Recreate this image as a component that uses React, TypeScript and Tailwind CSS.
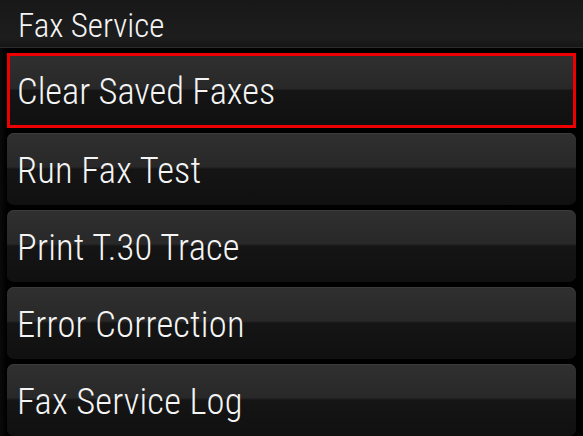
import React from "react";

const items = ["Run Fax Test", "Print T.30 Trace", "Error Correction", "Fax Service Log"];

const font = { fontFamily: '"Roboto Condensed", Roboto, sans-serif' };

function Btn({ label }: { label: string }) {
  return (
    <div className="h-[72px] shrink-0 rounded-[7px] bg-[linear-gradient(180deg,#303030_0%,#282828_47%,#151515_50%,#101010_100%)] shadow-[inset_0_1px_0_#3a3a3a] flex items-center pl-[10px] pt-[4px]">
      <span className="text-[36.5px] font-light text-[#f4f4f4] leading-none tracking-[0.2px]">{label}</span>
    </div>
  );
}

export default function App() {
  return (
    <div className="w-[583px] h-[436px] bg-black overflow-hidden flex flex-col" style={font}>
      <div className="h-[48px] shrink-0 bg-[linear-gradient(180deg,#181818_0%,#1d1d1d_80%,#161616_100%)] border-b border-[#2c2c2c] flex items-center pl-[18px] pt-[3px]">
        <span className="text-[33px] font-light text-[#f4f4f4] leading-none">Fax Service</span>
      </div>
      <div className="flex flex-col pl-[7px] pr-[7px] pt-[5px] bg-[linear-gradient(90deg,#0a0a0a_0px,#000_7px)]">
        <div className="h-[75px] shrink-0 border-[3px] border-[#ee0000] flex">
          <div className="flex-1 bg-[linear-gradient(180deg,#303030_0%,#282828_47%,#151515_50%,#101010_100%)] flex items-center pl-[7px] pt-[4px]">
            <span className="text-[36.5px] font-light text-[#f4f4f4] leading-none">Clear Saved Faxes</span>
          </div>
        </div>
        <div className="flex flex-col gap-[5px] mt-[5px]">
          {items.map((l) => (
            <Btn key={l} label={l} />
          ))}
        </div>
      </div>
    </div>
  );
}
